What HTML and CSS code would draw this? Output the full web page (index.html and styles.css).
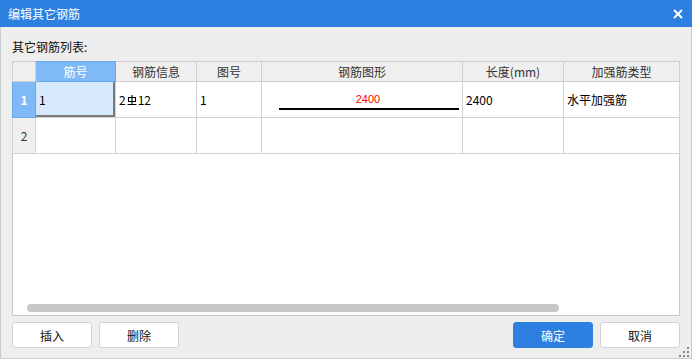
FILE: index.html
```html
<!DOCTYPE html>
<html>
<head>
<meta charset="utf-8">
<title>编辑其它钢筋</title>
<link rel="stylesheet" href="styles.css">
</head>
<body>
<div class="dialog">
  <div class="titlebar">
    <span class="title">编辑其它钢筋</span>
    <svg class="close" width="10" height="10" viewBox="0 0 10 10"><path d="M1 1L9 9M9 1L1 9" stroke="#fff" stroke-width="2"/></svg>
  </div>
  <div class="content">
    <div class="label">其它钢筋列表:</div>
    <div class="grid">
      <table class="sheet">
        <colgroup>
          <col style="width:23px"><col style="width:80px"><col style="width:81px"><col style="width:65px"><col style="width:201px"><col style="width:101px"><col style="width:116px">
        </colgroup>
        <tr class="head">
          <th class="corner"></th>
          <th class="sel">筋号</th>
          <th>钢筋信息</th>
          <th>图号</th>
          <th>钢筋图形</th>
          <th>长度(mm)</th>
          <th>加强筋类型</th>
        </tr>
        <tr class="row">
          <th class="rowhdr sel">1</th>
          <td class="current">1</td>
          <td>2<svg class="grade" width="10" height="11" viewBox="0 0 10 11"><path d="M1.5 2.5H8.5V6.5H1.5Z M5 0V9.5 M0.5 9.5H9.5" fill="none" stroke="#000" stroke-width="1.1"/></svg>12</td>
          <td>1</td>
          <td class="shape"><div class="dim">2400</div><div class="bar"></div></td>
          <td>2400</td>
          <td>水平加强筋</td>
        </tr>
        <tr class="row">
          <th class="rowhdr">2</th>
          <td></td><td></td><td></td><td></td><td></td><td></td>
        </tr>
      </table>
      <div class="hscroll"><div class="thumb"></div></div>
    </div>
    <div class="buttons">
      <button class="btn">插入</button>
      <button class="btn">删除</button>
      <span class="spacer"></span>
      <button class="btn primary">确定</button>
      <button class="btn">取消</button>
    </div>
  </div>
  <div class="grip">
    <i style="left:8px;top:0"></i>
    <i style="left:4px;top:4px"></i><i style="left:8px;top:4px"></i>
    <i style="left:0;top:8px"></i><i style="left:4px;top:8px"></i><i style="left:8px;top:8px"></i>
  </div>
</div>
</body>
</html>
```
FILE: styles.css
```css
/* Dialog: edit other rebars */

body
{ margin: 0;
background: #fff;
font-family: "Noto Sans CJK SC", "Noto Sans", sans-serif;
font-size: 12px;
color: #000;
}

div.dialog
{ position: relative;
width: 692px;
height: 359px;
box-sizing: border-box;
background: #eeeeee;
border-left: 1px solid #c9ccd3;
border-right: 1px solid #c9ccd3;
border-bottom: 1px solid #c9ccd3;
}

div.titlebar
{ height: 27px;
margin: 0 -1px;
background: #2e80e0;
color: #fff;
display: flex;
align-items: center;
padding: 0 9px 0 8px;
}

span.title
{ flex: 1;
font-size: 12px;
}

div.content
{ padding: 11px 11px 0 11px;
}

div.label
{ height: 23px;
line-height: 17px;
color: #111;
}

/* Grid */

div.grid
{ position: relative;
width: 668px;
height: 255px;
box-sizing: border-box;
background: #fff;
border: 1px solid #c8c8c8;
}

table.sheet
{ border-collapse: collapse;
table-layout: fixed;
width: 667px;
margin: -1px 0 0 -1px;
}

table.sheet th, table.sheet td
{ border: 1px solid #d2d2d2;
padding: 0 0 0 3px;
font-weight: normal;
white-space: nowrap;
overflow: hidden;
}

tr.head th
{ height: 19px;
background: #efefef;
color: #333;
text-align: center;
padding: 0;
border-color: #cfcfcf;
}

tr.head th.sel
{ background: #80b9f7;
color: #fff;
border-color: #6aa8ec;
}

table.sheet tr.row td, table.sheet tr.row th
{ height: 35px;
vertical-align: middle;
}

table.sheet th.rowhdr
{ background: #efefef;
color: #333;
text-align: center;
padding: 0;
}

table.sheet th.rowhdr.sel
{ background: #80b9f7;
color: #fff;
font-weight: bold;
border-color: #6aa8ec;
}

td.current
{ background: #d6e9fd;
box-shadow: inset -2px -2px 0 #7a7a7a;
}

svg.grade
{ vertical-align: -1px;
margin: 0 1px;
}

table.sheet td.shape
{ padding: 0 3px 0 17px;
}

div.dim
{ color: #ff0000;
font-family: "Liberation Sans", sans-serif;
font-size: 11px;
text-align: center;
line-height: 13px;
padding: 4px 2px 0 0;
}

div.bar
{ width: 180px;
height: 2px;
margin-top: 2px;
background: #000;
}

div.hscroll
{ position: absolute;
left: 14px;
top: 242px;
width: 532px;
height: 8px;
}

div.thumb
{ width: 100%;
height: 100%;
border-radius: 4px;
background: #c8c8c8;
}

/* Buttons */

div.buttons
{ display: flex;
gap: 7px;
margin-top: 6px;
width: 668px;
}

span.spacer
{ flex: 1;
}

button.btn
{ width: 80px;
height: 26px;
border: 1px solid #d3d3d3;
border-radius: 3px;
background: #fff;
color: #111;
font-family: "Noto Sans CJK SC", sans-serif;
font-size: 12px;
padding: 0;
}

button.primary
{ background: #2e80e0;
border-color: #2e80e0;
color: #fff;
}

div.grip
{ position: absolute;
right: 2px;
bottom: 1px;
width: 10px;
height: 10px;
}

div.grip i
{ position: absolute;
width: 2px;
height: 2px;
background: #8a8a8a;
}
```
